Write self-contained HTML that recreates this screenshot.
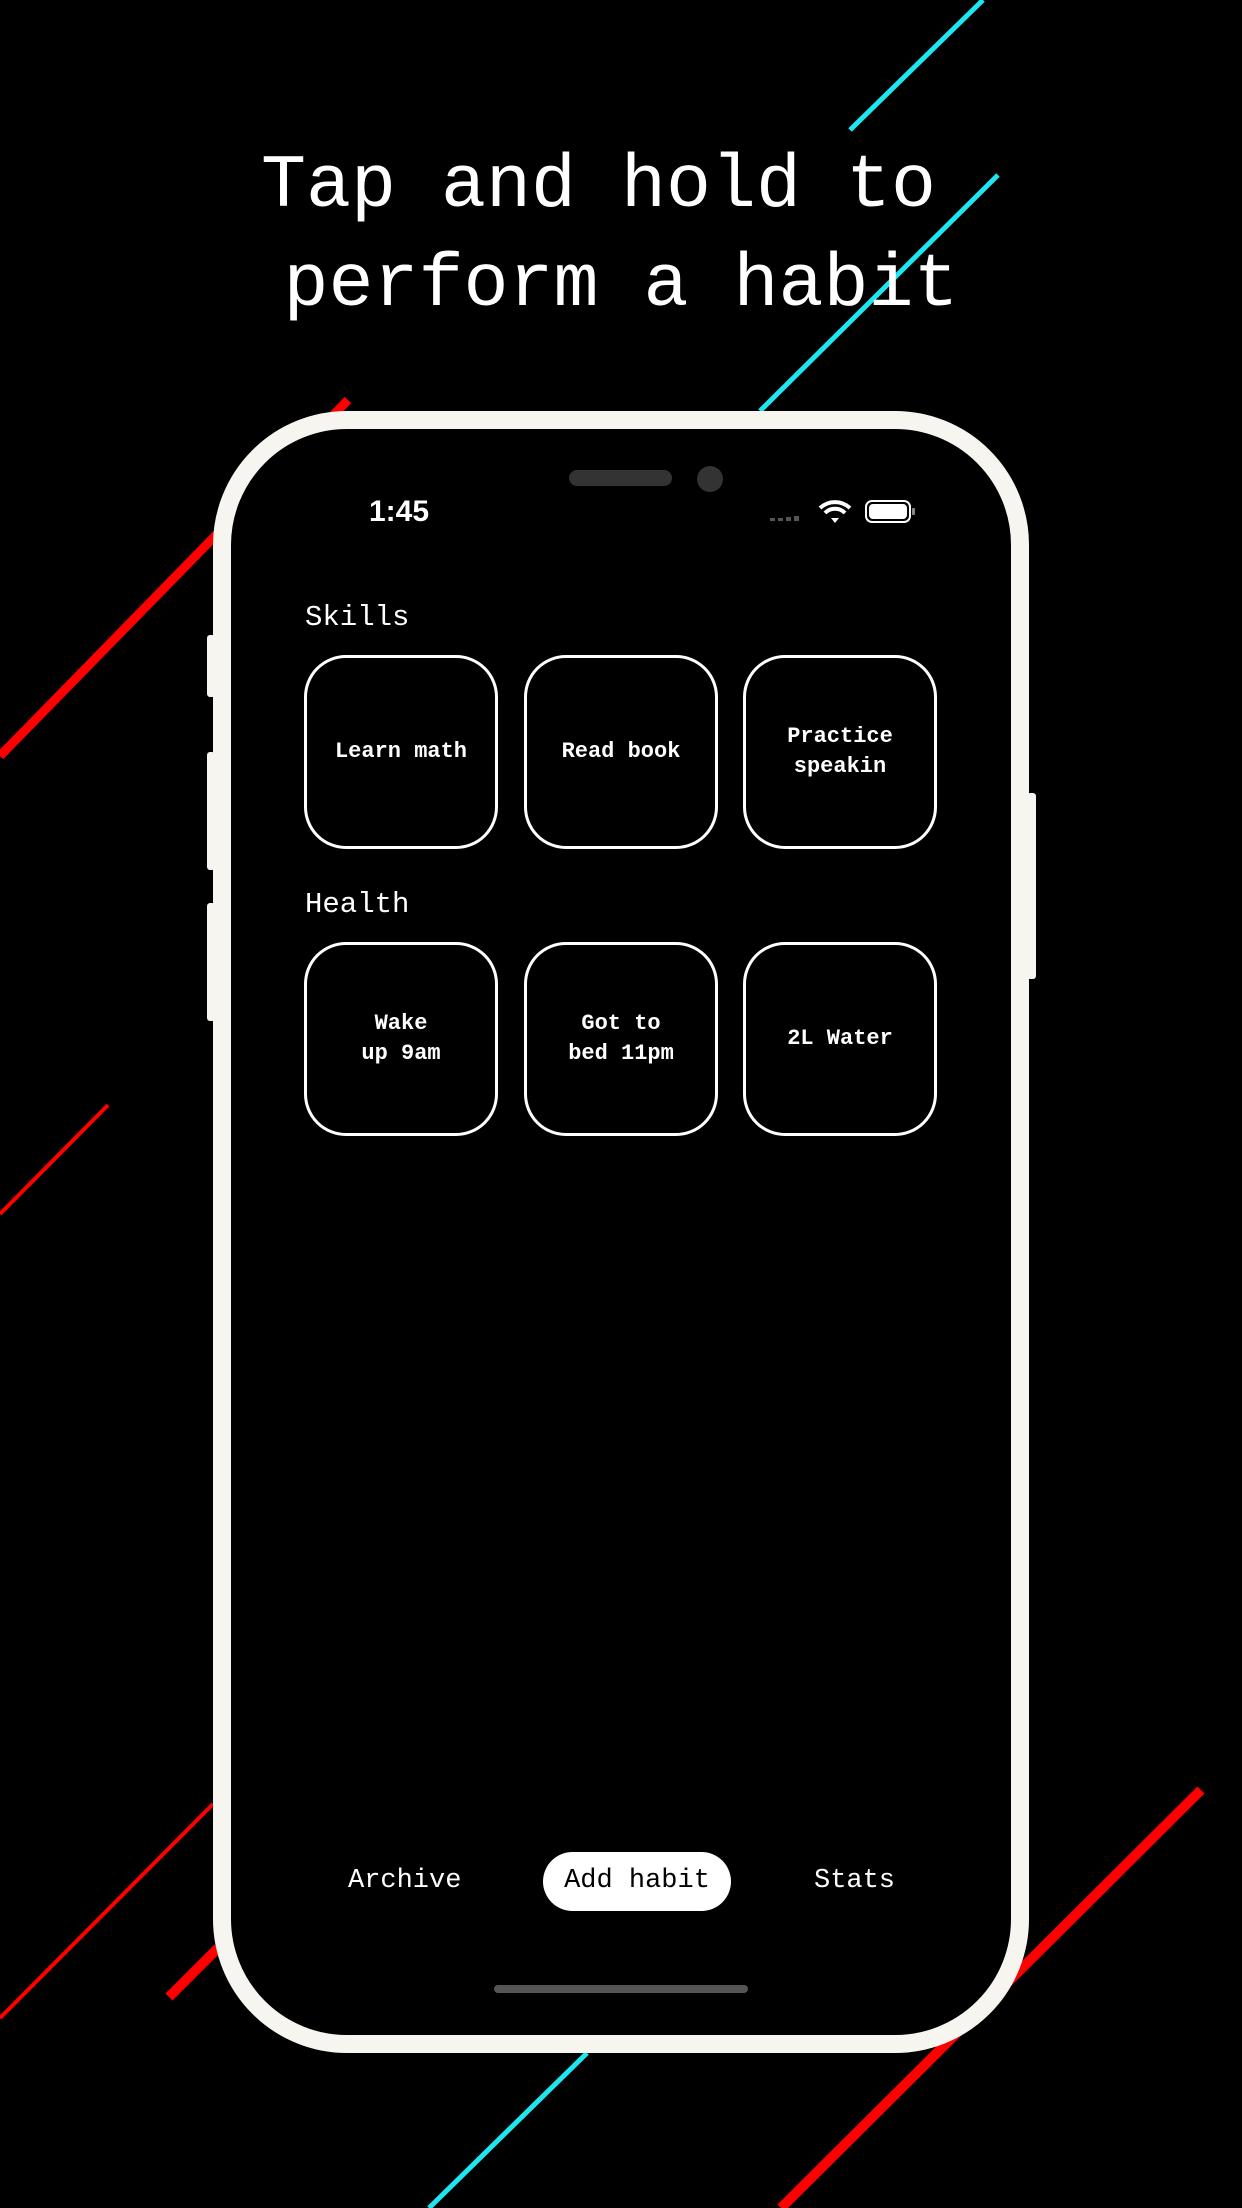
<!DOCTYPE html>
<html><head><meta charset="utf-8"><style>
body{margin:0;width:1242px;height:2208px;background:#000;position:relative;overflow:hidden;font-family:"Liberation Mono",monospace;color:#fff}
.abs{position:absolute}
h1{position:absolute;left:0;width:1242px;top:137px;margin:0;text-align:center;font-weight:normal;font-size:75px;line-height:99px;color:#fff;white-space:pre}
.phone{position:absolute;left:213px;top:411px;width:816px;height:1642px;box-sizing:border-box;border:18px solid #f7f5ef;border-radius:134px;background:#000}
.btn{position:absolute;background:#f7f5ef;border-radius:3px}
.tile{position:absolute;width:194px;height:194px;box-sizing:border-box;border:3px solid #fff;border-radius:42px;display:flex;align-items:center;justify-content:center;text-align:center;font-weight:bold;font-size:22px;line-height:30px}
.lbl{position:absolute;left:305px;font-size:29px;line-height:36px}
.nav{position:absolute;top:1863px;font-size:27px;line-height:36px}
</style></head><body>
<svg class="abs" style="left:0;top:0" width="1242" height="2208">
<g stroke-linecap="butt">
<line x1="850" y1="130" x2="983" y2="0" stroke="#1de6f0" stroke-width="5"/>
<line x1="760" y1="411" x2="998" y2="175" stroke="#1de6f0" stroke-width="5"/>
<line x1="429" y1="2208" x2="587" y2="2053" stroke="#1de6f0" stroke-width="5"/>
<line x1="348" y1="400" x2="0" y2="756" stroke="#ff0000" stroke-width="9"/>
<line x1="108" y1="1105" x2="0" y2="1214" stroke="#ff0000" stroke-width="4"/>
<line x1="213" y1="1804" x2="0" y2="2018" stroke="#ff0000" stroke-width="4"/>
<line x1="169" y1="1997" x2="218" y2="1948" stroke="#ff0000" stroke-width="10"/>
<line x1="1201" y1="1790" x2="781" y2="2208" stroke="#ff0000" stroke-width="10"/>
</g></svg>
<h1>Tap and hold to 
perform a habit</h1>
<div class="btn" style="left:207px;top:635px;width:8px;height:62px"></div>
<div class="btn" style="left:207px;top:752px;width:8px;height:118px"></div>
<div class="btn" style="left:207px;top:903px;width:8px;height:118px"></div>
<div class="btn" style="left:1027px;top:793px;width:9px;height:186px"></div>
<div class="phone"></div>
<div class="abs" style="left:569px;top:470px;width:103px;height:16px;border-radius:8px;background:#333"></div>
<div class="abs" style="left:697px;top:466px;width:26px;height:26px;border-radius:50%;background:#333"></div>
<div class="abs" style="left:369px;top:494px;font-family:'Liberation Sans',sans-serif;font-size:30px;line-height:36px;font-weight:bold">1:45</div>
<svg class="abs" style="left:768px;top:496px" width="150" height="32">
<g fill="#555"><rect x="2" y="22" width="5" height="3"/><rect x="10" y="22" width="5" height="3"/><rect x="18" y="21" width="5" height="4"/><rect x="26" y="20" width="5" height="5"/></g>
<path d="M52 12 A22 22 0 0 1 82 12" stroke="#fff" stroke-width="4" fill="none"/>
<path d="M57 17 A14 14 0 0 1 77 17" stroke="#fff" stroke-width="4" fill="none"/>
<path d="M63 22 L67 27 L71 22 Z" fill="#fff"/>
<rect x="98" y="5" width="44" height="21" rx="6" fill="none" stroke="#fff" stroke-width="2"/>
<rect x="101" y="8" width="38" height="15" rx="4" fill="#fff"/>
<rect x="144" y="12" width="3" height="7" rx="1" fill="#888"/>
</svg>
<div class="lbl" style="top:600px">Skills</div>
<div class="tile" style="left:304px;top:655px">Learn math</div>
<div class="tile" style="left:524px;top:655px">Read book</div>
<div class="tile" style="left:743px;top:655px">Practice<br>speakin</div>
<div class="lbl" style="top:887px">Health</div>
<div class="tile" style="left:304px;top:942px">Wake<br>up 9am</div>
<div class="tile" style="left:524px;top:942px">Got to<br>bed 11pm</div>
<div class="tile" style="left:743px;top:942px">2L Water</div>
<div class="nav" style="left:348px">Archive</div>
<div class="abs" style="left:543px;top:1852px;width:188px;height:59px;border-radius:30px;background:#fff"></div>
<div class="nav" style="left:543px;width:188px;text-align:center;color:#000">Add habit</div>
<div class="nav" style="left:814px">Stats</div>
<div class="abs" style="left:494px;top:1985px;width:254px;height:8px;border-radius:4px;background:#555"></div>
</body></html>
